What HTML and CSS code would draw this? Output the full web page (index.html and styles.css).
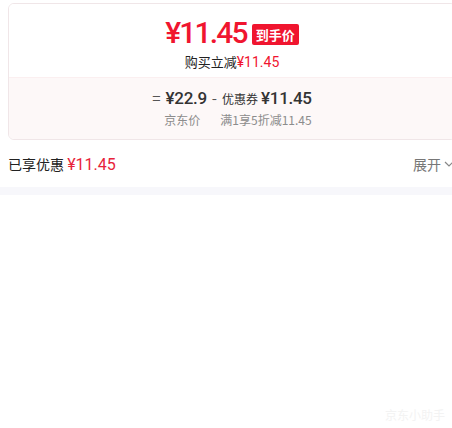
FILE: index.html
```html
<!DOCTYPE html>
<html lang="zh">
<head>
    <meta charset="UTF-8">
    <meta name="viewport" content="width=device-width, initial-scale=1.0">
    <link rel="stylesheet" href="styles.css">
</head>
<body>
    <div class="page">
        <div class="price-card">
            <div class="card-top">
                <div class="final-price">
                    <span class="final-num">¥11.45</span>
                    <span class="final-tag">到手价</span>
                </div>
                <div class="reduce">购买立减<span class="red num">¥11.45</span></div>
            </div>
            <div class="card-bottom">
                <div class="formula">
                    <span class="op">=</span>
                    <span class="amt">¥22.9</span>
                    <span class="op">-</span>
                    <span class="label">优惠券</span>
                    <span class="amt">¥11.45</span>
                </div>
                <div class="formula-notes">
                    <span class="note-jd">京东价</span>
                    <span class="note-cp">满1享5折减11.45</span>
                </div>
            </div>
        </div>
        <div class="saved-row">
            <div class="saved">已享优惠 <span class="red num">¥11.45</span></div>
            <div class="expand">展开
                <svg width="10" height="10" viewBox="0 0 10 10"><path d="M1 3 L5 7 L9 3" fill="none" stroke="#888" stroke-width="1.2"/></svg>
            </div>
        </div>
        <div class="gap-band"></div>
        <div class="watermark">京东小助手</div>
    </div>
</body>
</html>
```

FILE: styles.css
```css
html, body {
    margin: 0;
    background: #fff;
    overflow: hidden;
}
body {
    font-family: "Noto Sans CJK SC", "Noto Sans", sans-serif;
    color: #333;
}
.page {
    width: 456px;
    height: 428px;
    position: relative;
}
.red {
    color: #f0152f;
}
.num {
    font-family: Roboto, "Noto Sans CJK SC", sans-serif;
}
.price-card {
    margin: 3px 0 0 8px;
    border: 1px solid #f0e6e8;
    border-radius: 6px;
    overflow: hidden;
}
.card-top {
    background: #fff;
    padding: 9px 0 6px;
    display: flex;
    flex-direction: column;
    align-items: center;
    border-bottom: 1px solid #fbeff0;
}
.final-price {
    display: flex;
    align-items: center;
    gap: 5px;
    height: 40px;
}
.final-num {
    font-family: Roboto, sans-serif;
    color: #f0152f;
    font-size: 30px;
    font-weight: 500;
    letter-spacing: -1.8px;
    line-height: 40px;
}
.final-tag {
    background: #f0152f;
    color: #fff;
    font-size: 13px;
    font-weight: 700;
    padding: 0 4px;
    line-height: 21px;
    border-radius: 2px;
    margin-top: 2px;
}
.reduce {
    font-size: 13px;
    line-height: 18px;
    color: #222;
}
.reduce .num {
    font-size: 14px;
}
.card-bottom {
    background: #fdf8f8;
    padding: 8px 0 9px;
    display: flex;
    flex-direction: column;
    align-items: center;
}
.formula {
    display: flex;
    align-items: baseline;
    gap: 5px;
    height: 24px;
    line-height: 24px;
}
.formula .op {
    font-size: 15px;
    color: #555;
}
.formula .amt {
    font-family: Roboto, sans-serif;
    font-size: 17px;
    font-weight: 500;
    color: #333;
    letter-spacing: -0.3px;
}
.formula .label {
    font-size: 12px;
    color: #333;
    margin-right: -2px;
}
.formula-notes {
    display: flex;
    gap: 20px;
    font-size: 12px;
    color: #8c8c8c;
    line-height: 20px;
    padding-left: 12px;
}
.saved-row {
    display: flex;
    justify-content: space-between;
    align-items: center;
    height: 47px;
    padding-left: 8px;
}
.saved {
    font-size: 14px;
    color: #222;
}
.saved .red {
    font-size: 16px;
    font-weight: 400;
    color: #e8233a;
}
.expand {
    font-size: 14px;
    color: #777;
    display: flex;
    align-items: center;
    gap: 3px;
    padding-right: 2px;
}
.gap-band {
    height: 8px;
    background: #f7f7fb;
}
.watermark {
    position: absolute;
    left: 385px;
    top: 403px;
    font-size: 12px;
    color: #f3f3f3;
}
```
